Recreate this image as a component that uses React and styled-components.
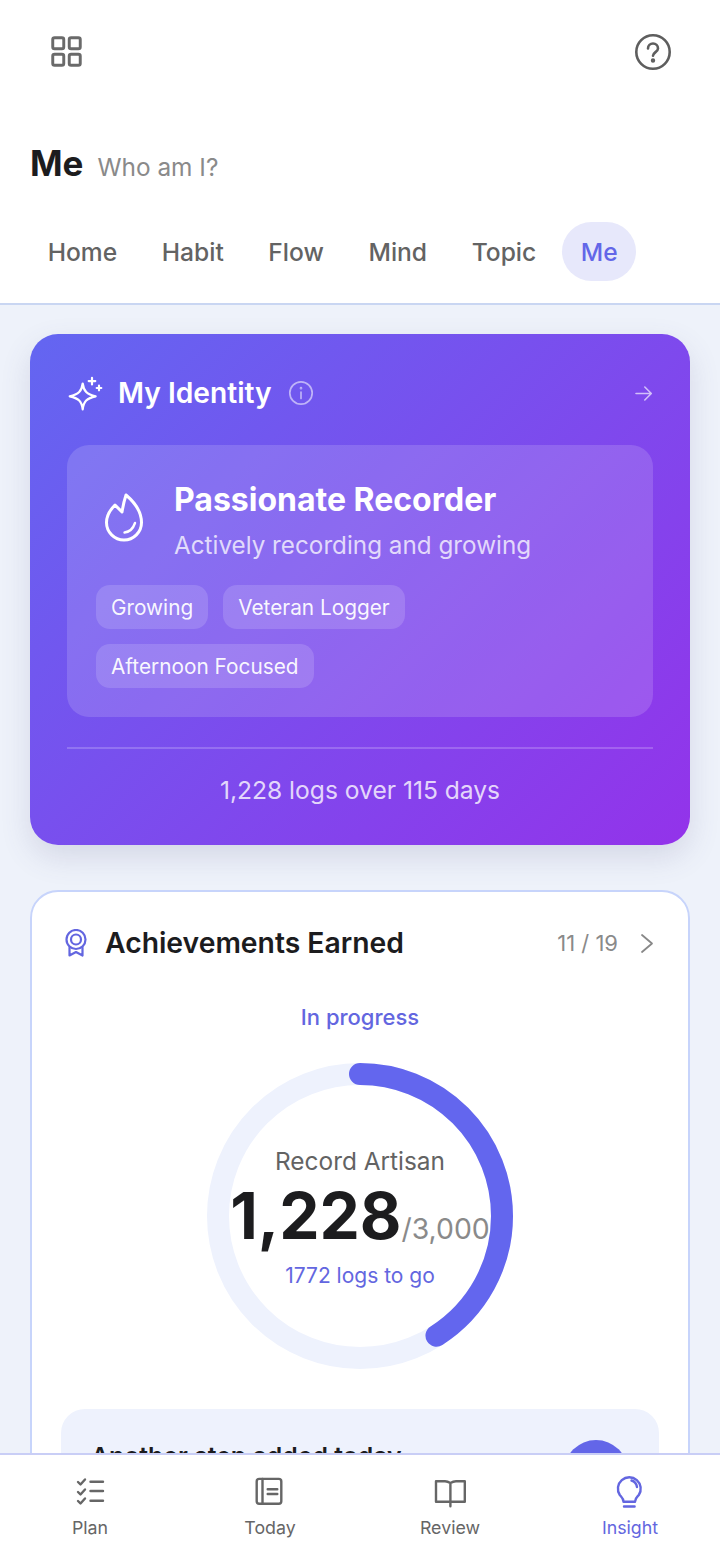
import React from "react";
import styled, { createGlobalStyle } from "styled-components";

const Global = createGlobalStyle`
  html, body { margin: 0; padding: 0; background: #eef2fa; }
  * { box-sizing: border-box; }
  body { font-family: Inter, "Noto Sans", sans-serif; }
`;

const Page = styled.div`
  width: 720px;
  height: 1558px;
  display: flex;
  flex-direction: column;
  overflow: hidden;
  background: #eef2fa;
`;
const Header = styled.header`
  flex: none;
  height: 305px;
  background: #fff;
  border-bottom: 2px solid #c9d6f2;
  display: flex;
  flex-direction: column;
`;
const TopBar = styled.div`
  height: 103px;
  padding: 0 48px 0 50px;
  display: flex;
  justify-content: space-between;
  align-items: center;
`;
const TitleRow = styled.div`
  margin-top: 37px;
  height: 46px;
  padding-left: 30px;
  display: flex;
  align-items: baseline;
  gap: 14px;
`;
const Title = styled.h1`
  margin: 0;
  font-size: 35px;
  line-height: 46px;
  font-weight: 700;
  color: #1c1c1e;
`;
const Subtitle = styled.span`
  font-size: 24.4px;
  font-weight: 400;
  color: #8a8a8a;
`;
const Tabs = styled.nav`
  margin-top: 36px;
  padding-left: 29px;
  display: flex;
  gap: 7.2px;
`;
const Tab = styled.div`
  height: 59px;
  padding: 0 18.7px;
  border-radius: 30px;
  display: flex;
  align-items: center;
  font-size: 24.6px;
  font-weight: 500;
  color: ${(p) => (p.$active ? "#6366e8" : "#636363")};
  background: ${(p) => (p.$active ? "#e7e8fb" : "transparent")};
`;
const Main = styled.main`
  flex: 1;
  min-height: 0;
  overflow: hidden;
  padding: 29px 30px 0;
  display: flex;
  flex-direction: column;
  gap: 45px;
`;
const IdentityCard = styled.section`
  flex: none;
  height: 511px;
  border-radius: 28px;
  padding: 36px 37px 0;
  background: linear-gradient(135deg, #6366f1 0%, #9333ea 100%);
  box-shadow: 0 12px 30px rgba(80, 80, 130, 0.16);
  color: #fff;
`;
const IdentityHead = styled.div`
  height: 46px;
  display: flex;
  align-items: center;
`;
const IdentityTitle = styled.h2`
  margin: 0 16px 0 15px;
  font-size: 28.2px;
  font-weight: 600;
`;
const ArrowSlot = styled.div`
  margin-left: auto;
  display: flex;
`;
const Inner = styled.div`
  margin-top: 29px;
  height: 272px;
  border-radius: 22px;
  background: rgba(255, 255, 255, 0.15);
  padding: 32px 30px 0 29px;
`;
const InnerTop = styled.div`
  display: flex;
  align-items: flex-start;
  gap: 25px;
`;
const FlameSlot = styled.div`
  flex: none;
  width: 53px;
  height: 88px;
  padding: 14px 0 0 2px;
`;
const PersonaName = styled.div`
  font-size: 32px;
  line-height: 46px;
  font-weight: 700;
`;
const PersonaDesc = styled.div`
  margin-top: 2px;
  font-size: 24.25px;
  line-height: 42px;
  color: rgba(255, 255, 255, 0.75);
`;
const Chips = styled.div`
  margin-top: 18px;
  display: flex;
  flex-wrap: wrap;
  gap: 15px;
  max-width: 420px;
`;
const Chip = styled.span`
  height: 44px;
  padding: 0 15px;
  border-radius: 14px;
  background: rgba(255, 255, 255, 0.15);
  display: flex;
  align-items: center;
  font-size: 20.8px;
  color: rgba(255, 255, 255, 0.95);
`;
const Summary = styled.div`
  margin-top: 30px;
  border-top: 2px solid rgba(255, 255, 255, 0.2);
  padding-top: 20px;
  text-align: center;
  font-size: 24.6px;
  line-height: 42px;
  color: rgba(255, 255, 255, 0.8);
`;
const AchievementCard = styled.section`
  flex: none;
  height: 700px;
  border: 2px solid #c7d4fb;
  border-radius: 28px;
  background: #fff;
  padding: 0 29px;
`;
const AchHead = styled.div`
  height: 102px;
  padding: 0 0 0 1px;
  display: flex;
  align-items: center;
`;
const AchTitle = styled.h2`
  margin: 0 0 0 15px;
  font-size: 28.3px;
  font-weight: 600;
  color: #1c1c1e;
`;
const Count = styled.span`
  margin-left: auto;
  margin-right: 17px;
  font-size: 22px;
  color: #8a8a8a;
`;
const Status = styled.div`
  text-align: center;
  font-size: 22px;
  line-height: 46px;
  font-weight: 500;
  color: #6366e0;
`;
const RingWrap = styled.div`
  position: relative;
  width: 306px;
  height: 306px;
  margin: 23px auto 0;
`;
const RingText = styled.div`
  position: absolute;
  inset: 0;
  padding-top: 80px;
  display: flex;
  flex-direction: column;
  align-items: center;
`;
const RingLabel = styled.div`
  font-size: 24.4px;
  line-height: 36px;
  color: #636363;
`;
const RingValue = styled.div`
  margin-top: 1px;
  display: flex;
  align-items: baseline;
  white-space: nowrap;
`;
const Big = styled.span`
  font-size: 64px;
  line-height: 72px;
  font-weight: 700;
  color: #1c1c1e;
`;
const Goal = styled.span`
  font-size: 28.4px;
  color: #8a8a8a;
`;
const RingHint = styled.div`
  margin-top: 7px;
  font-size: 21px;
  line-height: 34px;
  color: #6366e0;
`;
const Encourage = styled.div`
  margin-top: 40px;
  height: 140px;
  border-radius: 24px;
  background: #eef2fd;
  padding: 31px 31px 0 30px;
  display: flex;
  justify-content: space-between;
  align-items: flex-start;
`;
const EncourageText = styled.div`
  font-size: 24.8px;
  line-height: 32px;
  font-weight: 600;
  color: #1c1c1e;
`;
const Round = styled.div`
  width: 64px;
  height: 64px;
  border-radius: 50%;
  background: #6366e8;
`;
const BottomNav = styled.nav`
  flex: none;
  height: 105px;
  background: #fff;
  border-top: 2px solid #c9cef6;
  display: grid;
  grid-template-columns: repeat(4, 1fr);
  position: relative;
`;
const NavItem = styled.div`
  padding-top: 19px;
  display: flex;
  flex-direction: column;
  align-items: center;
  gap: 4px;
  font-size: 17.8px;
  line-height: 28px;
  color: ${(p) => (p.$active ? "#6366e0" : "#666")};
`;

const Icon = ({ size = 36, color = "currentColor", w = 2, vb = 36, children }) => (
  <svg width={size} height={size} viewBox={`0 0 ${vb} ${vb}`} fill="none" stroke={color} strokeWidth={w} strokeLinecap="round" strokeLinejoin="round" style={{ display: "block" }}>
    {children}
  </svg>
);

const GridIcon = () => (
  <Icon size={33} color="#6a6a6a" w={3.2}>
    <rect x="3" y="3" width="12" height="12" rx="2" />
    <rect x="21" y="3" width="12" height="12" rx="2" />
    <rect x="3" y="21" width="12" height="12" rx="2" />
    <rect x="21" y="21" width="12" height="12" rx="2" />
  </Icon>
);
const HelpIcon = () => (
  <Icon size={38} vb={38} color="#5e5e5e" w={2.6}>
    <circle cx="19" cy="19" r="16.7" />
    <path d="M14 15.500a5 5 0 0 1 10 0c0 3.400-5 3.800-5 7.200" />
    <circle cx="19" cy="27.500" r="0.9" fill="#5e5e5e" />
  </Icon>
);
const SparkIcon = () => (
  <Icon size={36} color="#fff" w={2.2}>
    <path d="M15.700 8.500c1 7.500 4 11 13 12.800-9 1.800-12 5.300-13 13-1-7.700-4-11.200-13-13 9-1.800 12-5.300 13-12.800z" />
    <path d="M25 2.800v6.600M21.700 6.100h6.600M32 10.700v4.600M29.700 13h4.600" />
  </Icon>
);
const InfoIcon = () => (
  <Icon size={26} vb={26} color="rgba(255,255,255,0.55)" w={1.7}>
    <circle cx="13" cy="13" r="11.200" />
    <path d="M13 12v6.500" />
    <circle cx="13" cy="8.200" r="0.5" />
  </Icon>
);
const ArrowIcon = () => (
  <Icon size={20} vb={20} color="rgba(255,255,255,0.65)" w={1.6}>
    <path d="M3 10.500h14.800M11.800 4 18.300 10.500 11.800 17" />
  </Icon>
);
const FlameIcon = () => (
  <Icon size={52} vb={52} color="#fff" w={3}>
    <path d="M28 4C35 10 43.500 20 43.500 31.500a17.500 17.500 0 0 1-35 0C8.500 25 12 19 17 14l7 7C25 15 26 10 28 4z" />
    <path d="M26.500 41.500c4.500-.5 8.500-3.500 10.500-9.500" strokeWidth="2.400" />
  </Icon>
);
const MedalIcon = () => (
  <Icon size={28} vb={28} color="#6366e0" w={2.2}>
    <circle cx="14" cy="10.500" r="9.500" />
    <circle cx="14" cy="10.500" r="5" />
    <path d="M7.500 18.500V26.500L14 23l6.500 3.500V18.500" />
  </Icon>
);
const ChevronIcon = () => (
  <Icon size={24} vb={24} color="#888" w={1.8}>
    <path d="M7 4l10 8.500-10 8.500" />
  </Icon>
);
const PlanIcon = () => (
  <Icon color="#666" w={2.4}>
    <path d="M18.500 7.700H31M18.500 17H31M18.500 26.700H31" />
    <path d="M6 8l2.500 2.500 4.500-5M6 18l2.500 2.500 4.500-5M6 27l2.500 2.500 4.500-5" />
  </Icon>
);
const TodayIcon = () => (
  <Icon color="#666" w={2.4}>
    <rect x="4.700" y="4.900" width="24.600" height="24.900" rx="2.500" />
    <path d="M10.500 5v24.800M15.700 15.200h9.600M15.700 20h9.600" />
  </Icon>
);
const ReviewIcon = () => (
  <Icon color="#666" w={2.4}>
    <path d="M18.400 9C16.500 7.800 15 7.200 13 7.200H4V27.700H32.800V7.200H24C22 7.200 20.300 7.800 18.400 9V32.200" />
  </Icon>
);
const InsightIcon = () => (
  <Icon color="#6366e0" w={2.4}>
    <path d="M11.500 27.700C11.500 24.500 9.500 23 7.800 21A11.400 11.400 0 1 1 26.800 21C25 23 23 24.500 23 27.700Z" />
    <path d="M12 32.500h10.600M19.500 6.500A8 8 0 0 1 25 13" />
  </Icon>
);

const tabs = ["Home", "Habit", "Flow", "Mind", "Topic", "Me"];
const chips = ["Growing", "Veteran Logger", "Afternoon Focused"];
const navItems = [
  { label: "Plan", icon: <PlanIcon /> },
  { label: "Today", icon: <TodayIcon /> },
  { label: "Review", icon: <ReviewIcon /> },
  { label: "Insight", icon: <InsightIcon />, active: true },
];

const Ring = () => {
  const r = 142;
  const c = 2 * Math.PI * r;
  const pct = 1228 / 3000;
  return (
    <svg width="306" height="306" viewBox="0 0 306 306" style={{ display: "block" }}>
      <circle cx="153" cy="153" r={r} fill="none" stroke="#eef2fd" strokeWidth="22" />
      <circle cx="153" cy="153" r={r} fill="none" stroke="#6366ee" strokeWidth="22" strokeLinecap="round" strokeDasharray={`${c * pct} ${c}`} transform="rotate(-90 153 153)" />
    </svg>
  );
};

export default function App() {
  return (
    <Page>
      <Global />
      <Header>
        <TopBar>
          <GridIcon />
          <HelpIcon />
        </TopBar>
        <TitleRow>
          <Title>Me</Title>
          <Subtitle>Who am I?</Subtitle>
        </TitleRow>
        <Tabs>
          {tabs.map((t) => (
            <Tab key={t} $active={t === "Me"}>{t}</Tab>
          ))}
        </Tabs>
      </Header>
      <Main>
        <IdentityCard>
          <IdentityHead>
            <SparkIcon />
            <IdentityTitle>My Identity</IdentityTitle>
            <InfoIcon />
            <ArrowSlot><ArrowIcon /></ArrowSlot>
          </IdentityHead>
          <Inner>
            <InnerTop>
              <FlameSlot><FlameIcon /></FlameSlot>
              <div>
                <PersonaName>Passionate Recorder</PersonaName>
                <PersonaDesc>Actively recording and growing</PersonaDesc>
              </div>
            </InnerTop>
            <Chips>
              {chips.map((c) => (
                <Chip key={c}>{c}</Chip>
              ))}
            </Chips>
          </Inner>
          <Summary>1,228 logs over 115 days</Summary>
        </IdentityCard>
        <AchievementCard>
          <AchHead>
            <MedalIcon />
            <AchTitle>Achievements Earned</AchTitle>
            <Count>11 / 19</Count>
            <ChevronIcon />
          </AchHead>
          <Status>In progress</Status>
          <RingWrap>
            <Ring />
            <RingText>
              <RingLabel>Record Artisan</RingLabel>
              <RingValue>
                <Big>1,228</Big>
                <Goal>/3,000</Goal>
              </RingValue>
              <RingHint>1772 logs to go</RingHint>
            </RingText>
          </RingWrap>
          <Encourage>
            <EncourageText>Another step added today</EncourageText>
            <Round />
          </Encourage>
        </AchievementCard>
      </Main>
      <BottomNav>
        {navItems.map((n) => (
          <NavItem key={n.label} $active={n.active}>
            {n.icon}
            {n.label}
          </NavItem>
        ))}
      </BottomNav>
    </Page>
  );
}
